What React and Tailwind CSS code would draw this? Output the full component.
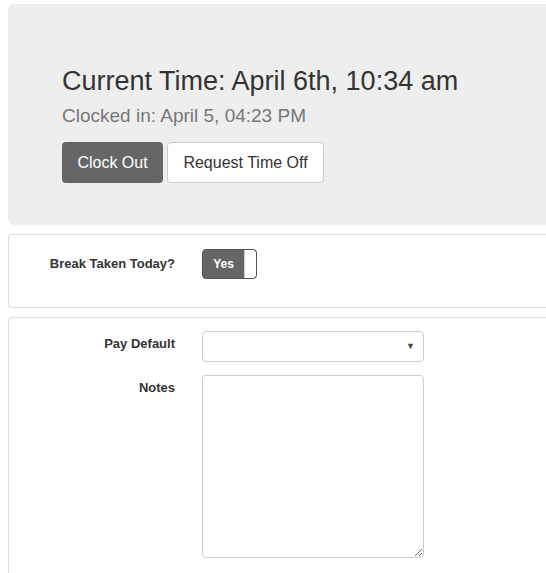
export default function App() {
  return (
    <div className="min-h-screen bg-white pl-2 pt-1 text-[#333]" style={{ fontFamily: '"Liberation Sans", Arial, sans-serif' }}>
      <div className="bg-[#eee] rounded-l-md pl-[54px] pt-[60px] pb-[42px]">
        <h1 className="text-[27px] leading-[34px] text-[#333]">Current Time: April 6th, 10:34 am</h1>
        <p className="mt-[6px] text-[19px] leading-[24px] text-[#777]">Clocked in: April 5, 04:23 PM</p>
        <div className="mt-[14px] flex gap-[4px]">
          <button className="h-[41px] w-[101px] rounded-[4px] bg-[#666] text-white text-[16px]">Clock Out</button>
          <button className="h-[41px] w-[157px] rounded-[4px] bg-white border border-[#ccc] text-[#333] text-[16px]">Request Time Off</button>
        </div>
      </div>

      <div className="mt-[9px] border border-[#ddd] border-r-0 rounded-l-[4px] h-[74px] flex pt-[14px]">
        <div className="w-[166px] text-right text-[13px] font-bold leading-[30px]">Break Taken Today?</div>
        <div className="ml-[27px]">
          <div className="w-[55px] h-[30px] rounded-[4px] bg-[#666] border border-[#555] flex items-center overflow-hidden">
            <span className="flex-1 text-center text-white text-[12px] font-bold">Yes</span>
            <span className="w-[12px] h-full bg-white rounded-r-[3px] border-l border-[#ccc]"></span>
          </div>
        </div>
      </div>

      <div className="mt-[9px] border border-[#ddd] border-r-0 border-b-0 rounded-tl-[4px] pt-[13px] pb-[20px]">
        <div className="flex items-start">
          <div className="w-[166px] text-right text-[13px] font-bold leading-[26px]">Pay Default</div>
          <div className="ml-[27px] w-[222px] h-[31px] border border-[#ccc] rounded-[4px] bg-white flex items-center justify-end pr-[8px]">
            <span className="text-[9px] text-[#444]">▼</span>
          </div>
        </div>
        <div className="flex items-start mt-[13px]">
          <div className="w-[166px] text-right text-[13px] font-bold leading-[26px]">Notes</div>
          <textarea className="ml-[27px] w-[222px] h-[183px] border border-[#ccc] rounded-[4px] bg-white resize-y"></textarea>
        </div>
      </div>
    </div>
  );
}
